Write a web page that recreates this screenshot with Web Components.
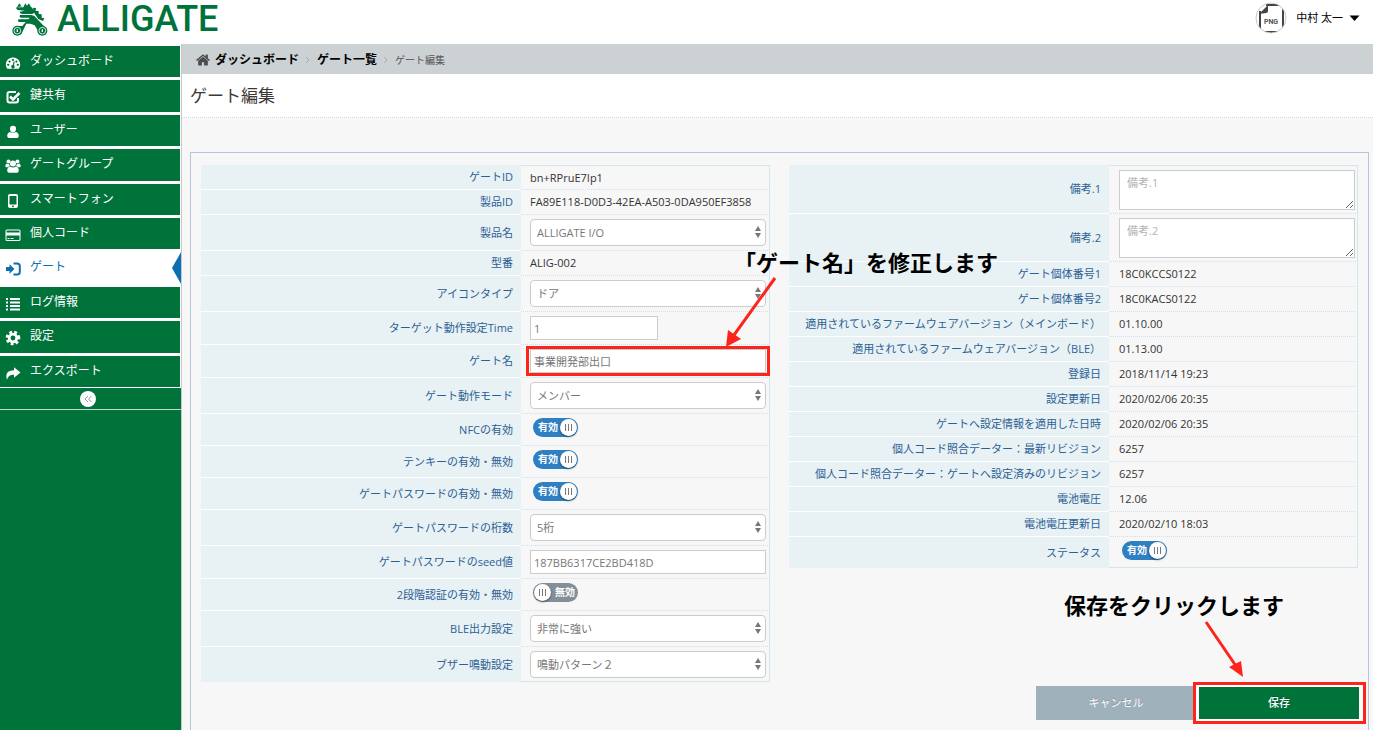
<!DOCTYPE html>
<html lang="ja">
<head>
<meta charset="utf-8">
<title>ゲート編集 | ALLIGATE</title>
<style>
  html, body { margin: 0; }
  body {
    font-family: "Open Sans", "Noto Sans CJK JP", sans-serif;
    font-size: 11px;
    line-height: 16px;
    color: #393939;
    background: #fff;
  }
</style>
</head>
<body>
<gate-app></gate-app>

<template id="tpl-app">
  <style>
    :host { display: flex; flex-direction: column; min-height: 100vh; }
    .body { display: flex; flex: 1; }
    main {
      flex: 1; min-width: 0; display: flex; flex-direction: column;
      border-left: 1px solid #c6c9cb; background: #f7f7f7;
    }
    h1 {
      margin: 0; padding: 0 8px; height: 43px; line-height: 43px;
      font-size: 17px; font-weight: 400; background: #fff;
      border-bottom: 1px dotted #d5d5d5;
    }
    gate-form { flex: 1; margin: 34px 4px 0 8px; }
  </style>
  <app-header>中村 太一</app-header>
  <div class="body">
    <side-nav></side-nav>
    <main>
      <bread-crumb></bread-crumb>
      <h1>ゲート編集</h1>
      <gate-form></gate-form>
    </main>
  </div>
</template>

<template id="tpl-header">
  <style>
    :host { display: flex; align-items: flex-start; justify-content: space-between; height: 44px; background: #fff; color: #000; }
    .brand { display: flex; align-items: center; gap: 9px; height: 38px; padding-left: 12px; color: #00733b; text-decoration: none; font: 500 36px/40px Roboto, sans-serif; }
    .user { display: flex; align-items: center; gap: 9px; height: 36px; margin-right: 13px; padding: 0; border: 0; background: none; font: inherit; color: inherit; }
    svg { display: block; }
    .caret { margin-left: -3px; }
  </style>
  <a class="brand" href="#">
    <svg width="36" height="33" viewBox="36 6 108 99" aria-hidden="true">
      <g fill="#00733b">
        <path d="M51 19l7-12 6 8 4 0M70 19l6-12 5 7 6-7 6 12zM49 19h46l10 14-8 6H68q-8 0-9-7l16-3-22-2q-6-3-4-8z"/>
        <path d="M99 20l9 1-1 9 9 0 0 9 9 1 0 10 8 2-4 8-14-6-14-20z"/>
        <path d="M60 42h34l9 3 37 39-20 16-16-27-13-5H79L64 99 40 84l10-9h17l10-12H56q-5-6 1-8h28l4-5H62q-6-3-2-8z"/>
        <circle cx="52" cy="89" r="15"/><circle cx="127" cy="89" r="15"/>
      </g>
      <g fill="none" stroke="#fff" stroke-width="2.500">
        <circle cx="52" cy="89" r="10"/><circle cx="127" cy="89" r="10"/>
        <path stroke-width="4" d="M52 85v8M127 85v8"/>
      </g>
    </svg>
    <span>ALLIGATE</span>
  </a>
  <button class="user" type="button">
    <svg width="32" height="32" viewBox="0 0 32 32" aria-hidden="true">
      <clipPath id="disc"><circle cx="16" cy="16" r="15"/></clipPath>
      <circle cx="16" cy="16" r="15" fill="#fff"/>
      <g clip-path="url(#disc)">
        <path fill="none" stroke="#444" stroke-width="2" d="M5 9v22M11 3h14q3 0 3 4v24M5 30h23"/>
        <path fill="#444" d="M4 12l9-9v6q0 2-2 2z"/>
      </g>
      <circle cx="16" cy="16" r="15" fill="none" stroke="#c9c9c9"/>
      <text x="16" y="22" text-anchor="middle" font-family="Roboto, sans-serif" font-size="7" font-weight="700" fill="#555">PNG</text>
    </svg>
    <slot></slot>
    <svg class="caret" width="11" height="6" viewBox="0 0 11 6" aria-hidden="true"><path d="M.5.5h10l-5 5.500z"/></svg>
  </button>
</template>

<template id="tpl-nav">
  <style>
    :host { display: flex; flex-direction: column; width: 181px; flex: none; background: #fff; }
    nav { display: grid; grid-auto-rows: 1fr; gap: 3px; min-height: 341px; padding-top: 2px; }
    .fold { display: flex; align-items: center; height: 21px; margin-top: 1px; padding-left: 80px; background: #00733b; border-bottom: 1px solid #c9d6ce; }
    button { width: 16px; height: 16px; padding: 0; border: 0; border-radius: 50%; background: #fff; }
    svg { display: block; }
    .rest { flex: 1; background: #00733b; }
  </style>
  <nav>
    <nav-item icon="dashboard">ダッシュボード</nav-item>
    <nav-item icon="check">鍵共有</nav-item>
    <nav-item icon="user">ユーザー</nav-item>
    <nav-item icon="group">ゲートグループ</nav-item>
    <nav-item icon="mobile">スマートフォン</nav-item>
    <nav-item icon="card">個人コード</nav-item>
    <nav-item icon="signin" active>ゲート</nav-item>
    <nav-item icon="list">ログ情報</nav-item>
    <nav-item icon="gear">設定</nav-item>
    <nav-item icon="share">エクスポート</nav-item>
  </nav>
  <div class="fold">
    <button type="button" aria-label="メニューを折りたたむ">
      <svg width="16" height="16" fill="none" stroke="#999" aria-hidden="true"><path d="M8 5L5 8l3 3M11.500 5l-3 3 3 3"/></svg>
    </button>
  </div>
  <div class="rest"></div>
</template>

<template id="tpl-nav-item">
  <style>
    :host { display: block; position: relative; margin-right: 1px; background: #00733b; color: #fff; }
    :host([active]) { background: #fff; color: #0b6fb2; margin-right: 0; }
    a { display: flex; gap: 9px; height: 100%; padding-left: 5px; color: inherit; text-decoration: none; font-size: 12px; line-height: 30px; }
    svg { width: 16px; height: 16px; margin-top: 9px; fill: currentColor; flex: none; }
    .mark { display: none; position: absolute; right: 0; top: 50%; width: 9px; height: 32px; margin-top: -16px; background: #0b6fb2; clip-path: polygon(100% 0, 0 50%, 100% 100%); }
    :host([active]) .mark { display: block; }
  </style>
  <a href="#"><svg viewBox="0 0 16 16" aria-hidden="true"></svg><span><slot></slot></span></a>
  <span class="mark"></span>
</template>

<template id="tpl-crumb">
  <style>
    :host { display: block; background: #ccd1d4; }
    ol { display: flex; align-items: center; box-sizing: border-box; height: 30px; margin: 0; padding: 2px 0 0 14px; list-style: none; }
    li { display: flex; align-items: center; font-size: 10px; color: #555; }
    a { display: flex; align-items: center; gap: 5px; font-size: 12px; font-weight: 700; color: #000; text-decoration: none; }
    .sep { margin: 0 6px; }
    svg { display: block; }
  </style>
  <ol>
    <li><a href="#"><svg width="14" height="14" viewBox="64 128 1664 1536" fill="#4c4c4c" aria-hidden="true"><path d="M1472 992v480q0 26-19 45t-45 19h-384v-384h-256v384h-384q-26 0-45-19t-19-45v-480q0-1 .5-3t.5-3l575-474 575 474q1 2 1 6zm223-69l-62 74q-8 9-21 11h-3q-13 0-21-7l-692-577-692 577q-12 8-24 7-13-2-21-11l-62-74q-8-10-7-23.500t11-21.500l719-599q32-26 76-26t76 26l244 204v-195q0-14 9-23t23-9h192q14 0 23 9t9 23v408l219 182q10 8 11 21.500t-7 23.500z"/></svg>ダッシュボード</a></li>
    <li><svg class="sep" width="6" height="8" fill="none" stroke="#a2abb0" aria-hidden="true"><path d="M1 1l3 3-3 3"/></svg><a href="#">ゲート一覧</a></li>
    <li aria-current="page"><svg class="sep" width="6" height="8" fill="none" stroke="#a2abb0" aria-hidden="true"><path d="M1 1l3 3-3 3"/></svg>ゲート編集</li>
  </ol>
</template>

<template id="tpl-form">
  <style>
    :host { display: block; border: 1px solid #b5c6d8; border-bottom: 0; padding-top: 12px; }
    .cols { display: grid; grid-template-columns: 1fr 1fr; gap: 19px; align-items: start; padding: 0 10px; }
    .actions { display: flex; justify-content: flex-end; align-items: center; gap: 3px; padding: 4px 9px 10px; }
    button { display: block; width: 160px; height: 34px; padding: 0; border: 0; background: #9fb1ba; color: #fff; font: inherit; line-height: 34px; text-shadow: 0 -1px 0 rgba(0,0,0,.2); }
    .save { position: relative; height: 32px; line-height: 32px; background: #00733b; font-weight: 500; }
  </style>
  <div class="cols">
    <spec-table rows="gate"></spec-table>
    <spec-table rows="device"></spec-table>
  </div>
  <div class="actions">
    <button type="button">キャンセル</button>
    <mark-box side="save"><button class="save" type="submit">保存</button><span slot="note">保存をクリックします</span></mark-box>
  </div>
</template>

<template id="tpl-mark">
  <style>
    :host { display: block; position: relative; }
    .frame { position: absolute; inset: -3px -4px; border: 3px solid #fe241b; pointer-events: none; z-index: 2; }
    :host([side="save"]) .frame { inset: -5px -7px -5px -6px; background: #fff; z-index: 0; }
    .note { position: absolute; z-index: 3; left: 204px; top: -103px; font-size: 22px; line-height: 32px; font-weight: 700; color: #000; white-space: nowrap; }
    :host([side="save"]) .note { left: auto; right: 75px; top: -98px; }
    svg { position: absolute; z-index: 3; fill: #fe241b; stroke: #fe241b; left: 190px; top: -76px; display: block; pointer-events: none; }
    :host([side="save"]) svg { left: 0; top: -70px; }
    .up, :host([side="save"]) .down { display: none; }
    :host([side="save"]) .up { display: block; }
  </style>
  <div class="frame"></div>
  <slot></slot>
  <div class="note"><slot name="note"></slot></div>
  <svg class="down" width="60" height="76" aria-hidden="true"><path stroke-width="3" d="M55 5L14 62"/><path stroke="none" d="M6 74l2-17 13 9z"/></svg>
  <svg class="up" width="60" height="64" aria-hidden="true"><path stroke-width="3" d="M7 5l30 44"/><path stroke="none" d="M44 60L30 50l12-6z"/></svg>
</template>

<template id="tpl-table">
  <style>
    :host { display: block; }
    table { width: 100%; table-layout: fixed; border-collapse: separate; border-spacing: 0; }
    th, td { box-sizing: border-box; padding: 0; height: 25px; }
    th { width: 320px; padding-right: 8px; background: #e8f1f3; border-bottom: 1px solid #fff; color: #2c5f96; font-weight: 400; text-align: right; white-space: nowrap; }
    td { padding: 0 3px 0 9px; border-right: 1px solid #d3e5f1; border-bottom: 1px dotted #cbe0f0; }
    tr:first-child td { border-top: 1px solid #d3e5f1; line-height: 14px; }
    tr:last-child th { border-bottom: 0; }
    tr:last-child td { border-bottom: 1px solid #d3e5f1; }
    .select > * { height: 36px; }
    .select:last-child > * { height: 35px; }
    .input > * { height: 33px; }
    .on > *, .off > * { height: 32px; }
    .on:last-child > * { height: 31px; }
    .area > * { height: 48px; }
    .area:first-child > * { height: 49px; }
    .on td, .off td { padding: 0 0 5px 12px; }
    .area td { padding: 0 2px 0 10px; }
    .plain td { color: #333; white-space: nowrap; }
    :host([rows="device"]) .plain td { padding-left: 10px; }
    :host([rows="device"]) .on td { padding: 0 0 3px 13px; }

    select, input[type="text"], textarea { display: block; box-sizing: border-box; width: 100%; margin: 0; border: 1px solid #ccc; border-radius: 0; background: #fff; color: #777; font: inherit; }
    .pick { position: relative; }
    select { appearance: none; height: 27px; padding: 0 20px 0 6px; border-radius: 4px; line-height: 25px; }
    .pick svg { position: absolute; right: 5px; top: 7px; fill: #777; pointer-events: none; }
    input[type="text"] { height: 24px; padding: 0 3px; line-height: 22px; }
    input.short { width: 128px; }
    textarea { height: 40px; padding: 4px 7px; line-height: 16px; resize: both; }
    textarea::placeholder { color: #b3b3b3; opacity: 1; }

    .toggle { display: block; position: relative; width: 45px; height: 19px; line-height: 18px; font-size: 10px; font-weight: 700; color: #fff; }
    .toggle input { appearance: none; display: block; position: absolute; inset: 0; margin: 0; border-radius: 10px; background: #848f99; }
    .toggle input:checked { background: #2f80c2; }
    .toggle input::after {
      content: ""; position: absolute; left: 1px; top: 1px; width: 17px; height: 17px; border-radius: 50%;
      background: repeating-linear-gradient(90deg, #777 0 1px, #fff 1px 3px) 5px 5px / 7px 7px no-repeat #fff;
      box-shadow: 0 1px 2px rgba(0,0,0,.5);
    }
    .toggle input:checked::after { left: 27px; }
    .toggle span { position: relative; padding-left: 22px; pointer-events: none; }
    .toggle input:checked + span { padding-left: 5px; }
  </style>
  <table><tbody></tbody></table>
</template>

<script>
  const ICONS = {
    dashboard: '<path fill-rule="evenodd" d="M8 2.500a7 7 0 0 1 6 10.800q-.3.500-.8.500H2.800q-.5 0-.8-.5A7 7 0 0 1 8 2.500zM8 4a1 1 0 1 0 .01 0zM4.600 5.400a1 1 0 1 0 .01 0zM3.200 8.800a1 1 0 1 0 .01 0zM11.400 5.400a1 1 0 1 0 .01 0zM12.800 8.800a1 1 0 1 0 .01 0zM8.700 6.500l-1 3.500a1.700 1.700 0 1 0 1.200.3l.9-3.500z"/>',
    check: '<path fill="none" stroke="currentColor" stroke-width="2" d="M13 9v2.500q0 2-2 2H4.500q-2 0-2-2V5q0-2 2-2H11"/><path fill="none" stroke="currentColor" stroke-width="2.500" d="M5 7.500L8 10.500l6.500-6.500"/>',
    user: '<path d="M8 1.800a3 3 0 0 1 3 3.200q0 3-3 3.700-3-.7-3-3.700a3 3 0 0 1 3-3.200zM5 8q3 2.200 6 0 2.800.8 2.800 4 0 2-2 2H4.200q-2 0-2-2 0-3.200 2.800-4z"/>',
    group: '<circle cx="3.500" cy="3.600" r="2"/><circle cx="12.500" cy="3.600" r="2"/><circle cx="8" cy="5.600" r="3"/><path d="M5 8.500q3 2 6 0 2.800.8 2.800 4 0 2.300-2 2.300H4.200q-2 0-2-2.300 0-3.200 2.800-4zM.3 8.500Q.3 6 1.600 5.500q1.400 1 2.600.6.200 1.300.8 1.900-1.200.1-2 1.200H1.500Q.3 9.200.3 8.500zM15.700 8.500q0-2.500-1.300-3-1.400 1-2.600.6-.2 1.300-.8 1.900 1.200.1 2 1.200h1.500q1.200 0 1.200-.7z"/>',
    mobile: '<path fill-rule="evenodd" d="M5 1h6q2 0 2 2v10q0 2-2 2H5q-2 0-2-2V3q0-2 2-2zM4.500 3v8.500h7V3zM8 12.400a.9.900 0 1 0 .01 0z"/>',
    card: '<path fill-rule="evenodd" d="M2 2.500h12q1.500 0 1.500 1.500v8.500q0 1.500-1.500 1.500H2q-1.500 0-1.500-1.500V4Q.5 2.500 2 2.500zM1.500 4v1.500h13V4l-.5-.5H2zM1.500 8.500v4l.5.500h12l.5-.5v-4zM2.500 11h2v1h-2zM5.500 11h3v1h-3z"/>',
    signin: '<path d="M1 6h3.500V3.300L9.500 8l-5 4.700V10H1z"/><path fill="none" stroke="currentColor" stroke-width="2" d="M8.500 2.500H12q2.800 0 2.800 2.500v6q0 2.500-2.800 2.500H8.500"/>',
    list: '<path d="M1 2h2v2H1zM5 2h10v2H5zM1 5.500h2v2H1zM5 5.500h10v2H5zM1 9h2v2H1zM5 9h10v2H5zM1 12.500h2v2H1zM5 12.500h10v2H5z"/>',
    gear: '<path fill="none" stroke="currentColor" stroke-width="3" stroke-dasharray="2.700 2.170" stroke-dashoffset="1.350" d="M13.800 8a5.800 5.800 0 1 1-11.600 0 5.800 5.800 0 1 1 11.600 0"/><circle cx="8" cy="8" r="3.800" fill="none" stroke="currentColor" stroke-width="2.800"/>',
    share: '<path d="M9 2.200L15.500 7.500 9 12.800V9.800Q3.500 9.300 2 14.800-1 5.500 9 5.200z"/>'
  };

  const pick = value => ({ type: 'select', value });
  const text = (value, short, note) => ({ type: 'input', value, short, note });
  const ROWS = {
    gate: [
      ['ゲートID', 'bn+RPruE7Ip1'],
      ['製品ID', 'FA89E118-D0D3-42EA-A503-0DA950EF3858'],
      ['製品名', pick('ALLIGATE I/O')],
      ['型番', 'ALIG-002'],
      ['アイコンタイプ', pick('ドア')],
      ['ターゲット動作設定Time', text('1', true)],
      ['ゲート名', text('事業開発部出口', false, '「ゲート名」を修正します')],
      ['ゲート動作モード', pick('メンバー')],
      ['NFCの有効', { type: 'on' }],
      ['テンキーの有効・無効', { type: 'on' }],
      ['ゲートパスワードの有効・無効', { type: 'on' }],
      ['ゲートパスワードの桁数', pick('5桁')],
      ['ゲートパスワードのseed値', text('187BB6317CE2BD418D')],
      ['2段階認証の有効・無効', { type: 'off' }],
      ['BLE出力設定', pick('非常に強い')],
      ['ブザー鳴動設定', pick('鳴動パターン２')]
    ],
    device: [
      ['備考.1', { type: 'area' }],
      ['備考.2', { type: 'area' }],
      ['ゲート個体番号1', '18C0KCCS0122'],
      ['ゲート個体番号2', '18C0KACS0122'],
      ['適用されているファームウェアバージョン（メインボード）', '01.10.00'],
      ['適用されているファームウェアバージョン（BLE）', '01.13.00'],
      ['登録日', '2018/11/14 19:23'],
      ['設定更新日', '2020/02/06 20:35'],
      ['ゲートへ設定情報を適用した日時', '2020/02/06 20:35'],
      ['個人コード照合データー：最新リビジョン', '6257'],
      ['個人コード照合データー：ゲートへ設定済みのリビジョン', '6257'],
      ['電池電圧', '12.06'],
      ['電池電圧更新日', '2020/02/10 18:03'],
      ['ステータス', { type: 'on' }]
    ]
  };

  class Base extends HTMLElement {
    constructor() {
      super();
      this.attachShadow({ mode: 'open' })
        .append(document.getElementById(this.constructor.tpl).content.cloneNode(true));
    }
  }
  const define = (name, tpl) => customElements.define(name, class extends Base { static tpl = tpl; });

  class NavItem extends Base {
    static tpl = 'tpl-nav-item';
    connectedCallback() {
      this.shadowRoot.querySelector('svg').innerHTML = ICONS[this.getAttribute('icon')];
      if (this.hasAttribute('active')) this.shadowRoot.querySelector('a').setAttribute('aria-current', 'page');
    }
  }

  class SpecTable extends Base {
    static tpl = 'tpl-table';
    connectedCallback() {
      this.shadowRoot.querySelector('tbody').innerHTML = ROWS[this.getAttribute('rows')].map(([name, field], i) => {
        if (typeof field === 'string') return `<tr class="plain"><th scope="row">${name}</th><td>${field}</td></tr>`;
        const id = 'f' + i;
        return `<tr class="${field.type}"><th scope="row"><label for="${id}">${name}</label></th><td>${this.control(id, name, field)}</td></tr>`;
      }).join('');
    }
    control(id, name, f) {
      switch (f.type) {
        case 'select':
          return `<div class="pick"><select id="${id}"><option>${f.value}</option></select><svg width="6" height="12" aria-hidden="true"><path d="M3 0l3 5H0zM3 12l3-5H0z"/></svg></div>`;
        case 'input': {
          const box = `<input type="text" id="${id}" value="${f.value}"${f.short ? ' class="short"' : ''}>`;
          return f.note ? `<mark-box>${box}<span slot="note">${f.note}</span></mark-box>` : box;
        }
        case 'area':
          return `<textarea id="${id}" placeholder="${name}"></textarea>`;
        default:
          return `<div class="toggle"><input type="checkbox" role="switch" id="${id}"${f.type === 'on' ? ' checked' : ''}><span>${f.type === 'on' ? '有効' : '無効'}</span></div>`;
      }
    }
  }

  define('mark-box', 'tpl-mark');
  customElements.define('nav-item', NavItem);
  customElements.define('spec-table', SpecTable);
  define('app-header', 'tpl-header');
  define('side-nav', 'tpl-nav');
  define('bread-crumb', 'tpl-crumb');
  define('gate-form', 'tpl-form');
  define('gate-app', 'tpl-app');
</script>
</body>
</html>
